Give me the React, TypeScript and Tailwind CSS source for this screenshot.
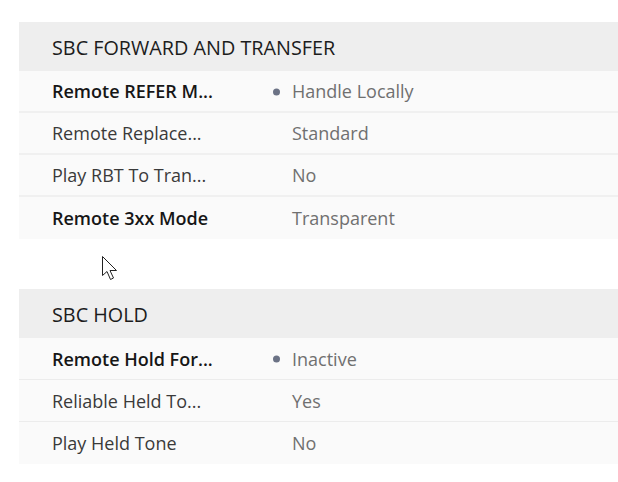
type Row = { label: string; value: string; strong?: boolean; dot?: boolean }

const forward: Row[] = [
  { label: 'Remote REFER M...', value: 'Handle Locally', strong: true, dot: true },
  { label: 'Remote Replace...', value: 'Standard' },
  { label: 'Play RBT To Tran...', value: 'No' },
  { label: 'Remote 3xx Mode', value: 'Transparent', strong: true },
]

const hold: Row[] = [
  { label: 'Remote Hold For...', value: 'Inactive', strong: true, dot: true },
  { label: 'Reliable Held To...', value: 'Yes' },
  { label: 'Play Held Tone', value: 'No' },
]

function Section({ title, rows, thin }: { title: string; rows: Row[]; thin?: boolean }) {
  return (
    <div className="ml-[19px]">
      <div className="h-[49px] bg-[#eeeeee] flex items-center pl-[33px] pt-[2px] text-[19.8px] text-[#1c1c1c]">
        {title}
      </div>
      {rows.map((r, i) => (
        <div
          key={r.label}
          className={
            'h-[42px] bg-[#fafafa] flex items-center pt-[1px] ' +
            (i < rows.length - 1 ? (thin ? 'border-b border-[#ececec]' : 'border-b-2 border-[#f0f0f0]') : '')
          }
        >
          <div
            className={
              'w-[273px] pl-[33px] text-[18px] ' +
              (r.strong ? 'font-semibold text-[#161616]' : 'text-[#3a3a3a]')
            }
          >
            {r.label}
          </div>
          <div className="relative text-[18px] text-[#707070]">
            {r.dot && (
              <span className="absolute left-[-19px] top-1/2 -translate-y-1/2 w-[7px] h-[7px] rounded-full bg-[#6b7285]" />
            )}
            {r.value}
          </div>
        </div>
      ))}
    </div>
  )
}

function Cursor() {
  return (
    <svg width="20" height="28" viewBox="0 0 20 28" className="ml-[101px] mt-[16px] mb-[6px]">
      <path
        d="M1.5 1.5 L1.5 20.5 L6 16.5 L9.5 24.5 L12.5 23 L9 15.5 L15.5 15.5 Z"
        fill="#ffffff"
        stroke="#222222"
        strokeWidth="1"
        strokeLinejoin="miter"
      />
    </svg>
  )
}

export default function App() {
  return (
    <div className="w-[618px] h-[482px] bg-white pt-[22px] overflow-hidden" style={{ fontFamily: '"Open Sans", sans-serif' }}>
      <Section title="SBC FORWARD AND TRANSFER" rows={forward} />
      <Cursor />
      <Section title="SBC HOLD" rows={hold} thin />
    </div>
  )
}
